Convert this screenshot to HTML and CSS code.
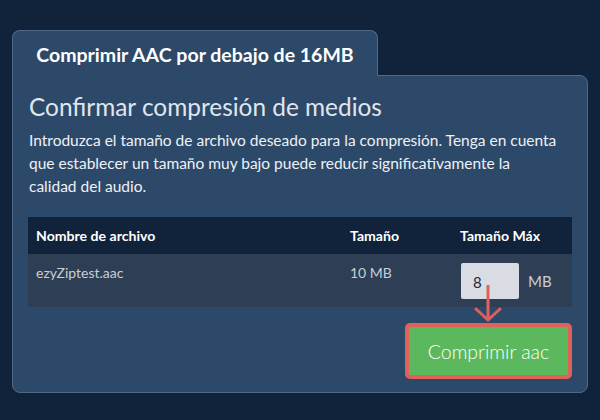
FILE: index.html
```html
<!DOCTYPE html>
<html lang="es">
<head>
<meta charset="utf-8">
<link rel="stylesheet" href="styles.css">
</head>
<body>
<div class="wrap">
  <div class="tab">Comprimir AAC por debajo de 16MB</div>
  <div class="panel">
    <h2 class="title">Confirmar compresión de medios</h2>
    <p class="desc">Introduzca el tamaño de archivo deseado para la compresión. Tenga en cuenta que establecer un tamaño muy bajo puede reducir significativamente la calidad del audio.</p>
    <div class="table">
      <div class="row head">
        <div class="cell">Nombre de archivo</div>
        <div class="cell">Tamaño</div>
        <div class="cell">Tamaño Máx</div>
      </div>
      <div class="row body">
        <div class="cell">ezyZiptest.aac</div>
        <div class="cell">10 MB</div>
        <div class="cell maxcell">
          <div class="inbox">8</div>
          <span class="unit">MB</span>
          <svg class="arrow" width="28" height="38" viewBox="0 0 28 38"><path d="M14 1 V35 M2 24 L14 35 L26 24" fill="none" stroke="#e0605a" stroke-width="3" stroke-linecap="round" stroke-linejoin="round"/></svg>
        </div>
      </div>
    </div>
    <div class="actions">
      <button class="btn">Comprimir aac</button>
    </div>
  </div>
</div>
</body>
</html>
```

FILE: styles.css
```css
html, body {
  margin: 0;
  padding: 0;
  background: #11233a;
  font-family: Lato, "Open Sans", sans-serif;
}
.wrap {
  padding: 30px 12px 0 12px;
  width: 576px;
}
.tab {
  position: relative;
  z-index: 1;
  width: 366px;
  height: 46px;
  box-sizing: border-box;
  margin-bottom: -1px;
  background: #2d4969;
  border: 1px solid #4f6988;
  border-bottom: none;
  border-radius: 8px 8px 0 0;
  color: #ffffff;
  font-weight: 700;
  font-size: 19.5px;
  display: flex;
  align-items: center;
  justify-content: center;
  padding-top: 2px;
}
.panel {
  background: #2d4969;
  border: 1px solid #4f6988;
  border-radius: 0 8px 8px 8px;
  padding: 15px 15px 14px 15px;
  height: 318px;
  box-sizing: border-box;
}
.title {
  margin: 0;
  font-weight: 400;
  font-size: 24.4px;
  line-height: 32px;
  color: #e1e6ec;
  padding-left: 1px;
}
.desc {
  margin: 6px 0 0 0;
  padding: 0 12px 0 1px;
  font-size: 15.5px;
  line-height: 23px;
  color: #eef1f5;
}
.table {
  margin-top: 19px;
}
.row {
  display: grid;
  grid-template-columns: 314px 110px 1fr;
}
.head {
  background: #11233a;
  height: 37px;
  color: #ffffff;
  font-weight: 700;
  font-size: 14.1px;
}
.head .cell {
  padding: 0 8px;
  display: flex;
  align-items: center;
}
.body {
  background: #2e3f55;
  height: 53px;
  color: #c9ced6;
  font-size: 14px;
}
.body .cell {
  padding: 9px 8px 0 8px;
  line-height: 20px;
}
.maxcell {
  position: relative;
  display: flex;
  align-items: flex-start;
  gap: 9px;
}
.inbox {
  margin-left: 1px;
  width: 58px;
  height: 36px;
  box-sizing: border-box;
  background: #d9dde3;
  border-radius: 2px;
  color: #1d2633;
  font-size: 15px;
  padding: 9px 0 0 12px;
  line-height: 20px;
}
.unit {
  font-size: 15px;
  margin-top: 8px;
  line-height: 20px;
}
.arrow {
  position: absolute;
  left: 22px;
  top: 31px;
}
.actions {
  display: flex;
  justify-content: flex-end;
  margin-top: 16px;
}
.btn {
  width: 167px;
  height: 56px;
  box-sizing: border-box;
  background: #5cb85c;
  border: 4px solid #e0605a;
  border-radius: 5px;
  color: #ffffff;
  font-family: Lato, "Open Sans", sans-serif;
  font-weight: 300;
  font-size: 19.5px;
  padding: 0;
}
```
